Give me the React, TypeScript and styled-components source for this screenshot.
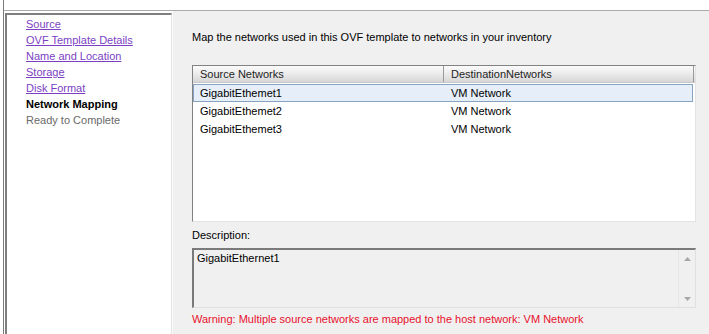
import React from "react";
import styled, { createGlobalStyle } from "styled-components";

const GlobalStyle = createGlobalStyle`
  html, body {
    margin: 0;
    padding: 0;
    background: #ffffff;
  }
  body {
    font-family: "Liberation Sans", Arial, sans-serif;
    font-size: 11px;
    color: #000000;
  }
`;

interface Step {
  label: string;
  state: "done" | "current" | "todo";
}

const steps: Step[] = [
  { label: "Source", state: "done" },
  { label: "OVF Template Details", state: "done" },
  { label: "Name and Location", state: "done" },
  { label: "Storage", state: "done" },
  { label: "Disk Format", state: "done" },
  { label: "Network Mapping", state: "current" },
  { label: "Ready to Complete", state: "todo" },
];

const mappings = [
  { source: "GigabitEthemet1", dest: "VM Network" },
  { source: "GigabitEthemet2", dest: "VM Network" },
  { source: "GigabitEthemet3", dest: "VM Network" },
];

const App: React.FC = () => {
  return (
    <>
      <GlobalStyle />
      <Window>
        <Frame>
          <Header />
          <Body>
            <Nav>
              {steps.map((s) => (
                <NavItem key={s.label} state={s.state}>
                  {s.label}
                </NavItem>
              ))}
            </Nav>
            <Content>
              <Intro>
                Map the networks used in this OVF template to networks in your
                inventory
              </Intro>
              <Grid>
                <HeaderRow>
                  <HeaderCell>Source Networks</HeaderCell>
                  <HeaderCell>DestinationNetworks</HeaderCell>
                  <HeaderFiller />
                </HeaderRow>
                <RowList>
                  {mappings.map((m, i) => (
                    <DataRow key={m.source} selected={i === 0}>
                      <SourceCell>{m.source}</SourceCell>
                      <DestCell>{m.dest}</DestCell>
                    </DataRow>
                  ))}
                </RowList>
              </Grid>
              <Label>Description:</Label>
              <DescBox>
                <DescText>GigabitEthernet1</DescText>
                <ScrollBar>
                  <Arrow viewBox="0 0 7 4" width="7" height="4">
                    <path d="M0 4 L3.5 0 L7 4 Z" fill="#a8a8a8" />
                  </Arrow>
                  <Arrow viewBox="0 0 7 4" width="7" height="4">
                    <path d="M0 0 L3.5 4 L7 0 Z" fill="#a8a8a8" />
                  </Arrow>
                </ScrollBar>
              </DescBox>
              <Warning>
                Warning: Multiple source networks are mapped to the host network:
                VM Network
              </Warning>
            </Content>
          </Body>
        </Frame>
      </Window>
    </>
  );
};

const Window = styled.div`
  width: 709px;
  height: 334px;
  overflow: hidden;
  background: #ffffff;
`;

const Frame = styled.div`
  margin-left: 3px;
  height: 100%;
  border-left: 1px solid #7c7c7c;
  display: flex;
  flex-direction: column;
`;

const Header = styled.div`
  height: 10px;
  border-bottom: 1px solid #a9a9a9;
  flex: none;
`;

const Body = styled.div`
  flex: 1;
  display: flex;
  min-height: 0;
`;

const Nav = styled.div`
  width: 167px;
  flex: none;
  box-sizing: border-box;
  margin: 2px 0 0 1px;
  padding: 1px 0 0 19px;
  background: #ffffff;
  border-top: 2px solid #7f7f7f;
  border-left: 2px solid #7f7f7f;
  border-right: 1px solid #e4e4e4;
  display: flex;
  flex-direction: column;
`;

const NavItem = styled.div<{ state: Step["state"] }>`
  height: 16px;
  line-height: 16px;
  white-space: nowrap;
  color: ${(p) =>
    p.state === "done" ? "#7b3fc4" : p.state === "current" ? "#000000" : "#6a6a6a"};
  text-decoration: ${(p) => (p.state === "done" ? "underline" : "none")};
  font-weight: ${(p) => (p.state === "current" ? "bold" : "normal")};
`;

const Content = styled.div`
  flex: 1;
  background: #f0f0f0;
  border-left: 1px solid #fafafa;
  padding: 19px 13px 0 19px;
  display: flex;
  flex-direction: column;
`;

const Intro = styled.div`
  line-height: 14px;
  white-space: nowrap;
`;

const Grid = styled.div`
  margin-top: 21px;
  height: 155px;
  background: #ffffff;
  border: 1px solid;
  border-color: #828282 #e3e3e3 #e3e3e3 #828282;
  display: flex;
  flex-direction: column;
`;

const HeaderRow = styled.div`
  height: 16px;
  display: flex;
  border-bottom: 1px solid #c8c8c8;
  background: linear-gradient(#fbfbfb, #e9e9e9 55%, #d6d6d6);
`;

const HeaderCell = styled.div`
  line-height: 16px;
  padding-left: 7px;
  box-sizing: border-box;
  white-space: nowrap;
  color: #1e1e1e;
  &:first-child {
    width: 251px;
    border-right: 1px solid #9a9a9a;
  }
  &:nth-child(2) {
    flex: 1;
    border-right: 1px solid #9a9a9a;
  }
`;

const HeaderFiller = styled.div`
  width: 1px;
`;

const RowList = styled.div`
  padding-top: 1px;
  display: flex;
  flex-direction: column;
`;

const DataRow = styled.div<{ selected?: boolean }>`
  height: 18px;
  margin-right: 2px;
  box-sizing: border-box;
  display: flex;
  align-items: center;
  background: ${(p) => (p.selected ? "#e6eff9" : "transparent")};
  border: 1px solid ${(p) => (p.selected ? "#86a3c2" : "transparent")};
`;

const SourceCell = styled.div`
  width: 251px;
  padding-left: 6px;
  box-sizing: border-box;
  white-space: nowrap;
`;

const DestCell = styled.div`
  flex: 1;
  padding-left: 6px;
  white-space: nowrap;
`;

const Label = styled.div`
  margin-top: 6px;
  line-height: 14px;
`;

const DescBox = styled.div`
  margin-top: 6px;
  height: 57px;
  display: flex;
  background: #f0f0f0;
  border: 1px solid;
  border-top: 2px solid #7a7a7a;
  border-left: 2px solid #7a7a7a;
  border-color: #7a7a7a #e0e0e0 #e0e0e0 #7a7a7a;
`;

const DescText = styled.div`
  flex: 1;
  padding: 1px 3px;
  line-height: 14px;
`;

const ScrollBar = styled.div`
  width: 16px;
  border-left: 1px solid #e6e6e6;
  display: flex;
  flex-direction: column;
  justify-content: space-between;
  align-items: center;
  padding: 7px 0 6px;
`;

const Arrow = styled.svg`
  display: block;
`;

const Warning = styled.div`
  margin-top: 4px;
  line-height: 14px;
  color: #e8112d;
  white-space: nowrap;
`;

export default App;
